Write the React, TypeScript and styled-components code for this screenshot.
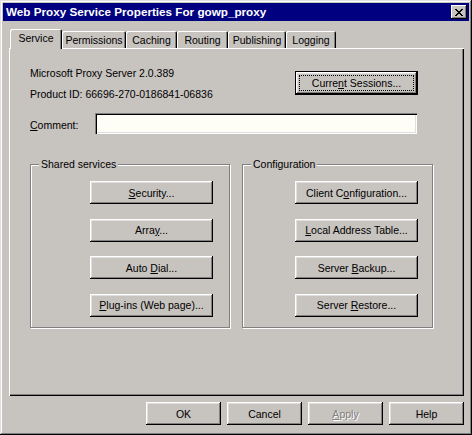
import React from 'react';
import styled, { createGlobalStyle, css } from 'styled-components';

const FACE = '#c7c3bf';
const SHADOW = '#808080';
const LIGHT = '#dfdfdf';

const GlobalStyle = createGlobalStyle`
  html, body { margin: 0; padding: 0; background: ${FACE}; }
  body {
    font-family: "Liberation Sans", Arial, sans-serif;
    font-size: 10.5px;
    color: #000;
  }
  * { box-sizing: border-box; }
`;

const Window = styled.div`
  width: 472px;
  height: 435px;
  padding: 3px;
  background: ${FACE};
  display: flex;
  flex-direction: column;
  box-shadow: inset -1px -1px 0 #000, inset 1px 1px 0 ${LIGHT}, inset -2px -2px 0 ${SHADOW}, inset 2px 2px 0 #fff;
`;

const TitleBar = styled.div`
  height: 18px;
  flex: 0 0 18px;
  background: #000080;
  display: flex;
  align-items: center;
  padding: 0 2px 0 3px;
`;

const Title = styled.span`
  flex: 1;
  color: #fff;
  font-weight: bold;
  font-size: 11.7px;
  line-height: 14px;
  white-space: nowrap;
`;

const CloseButton = styled.div`
  width: 16px;
  height: 14px;
  background: ${FACE};
  display: flex;
  align-items: center;
  justify-content: center;
  box-shadow: inset -1px -1px 0 #000, inset 1px 1px 0 #fff, inset -2px -2px 0 ${SHADOW};
`;

const Body = styled.div`
  flex: 1;
  display: flex;
  flex-direction: column;
  padding: 8px 5px 0 6px;
`;

const TabRow = styled.div`
  height: 19px;
  display: flex;
  align-items: flex-end;
  padding-left: 1px;
  position: relative;
  z-index: 1;
`;

const Tab = styled.div<{ $w: number; $active?: boolean }>`
  width: ${(p) => p.$w}px;
  height: 17px;
  background: ${FACE};
  border-top-left-radius: 2px;
  border-top-right-radius: 2px;
  box-shadow: inset 1px 1px 0 #fff, inset -1px 0 0 #000, inset -2px 0 0 ${SHADOW};
  text-align: center;
  line-height: 13px;
  padding-top: 3px;
  white-space: nowrap;
  ${(p) =>
    p.$active &&
    css`
      height: 20px;
      margin-bottom: -1px;
      position: relative;
      z-index: 2;
    `}
`;

const Panel = styled.div`
  height: 348px;
  flex: 0 0 348px;
  background: ${FACE};
  box-shadow: inset 1px 1px 0 #fff, inset -1px -1px 0 #000, inset -2px -2px 0 ${SHADOW};
  display: flex;
  flex-direction: column;
`;

const TopRow = styled.div`
  height: 65px;
  display: flex;
  justify-content: space-between;
  align-items: flex-start;
  padding: 0 46px 0 21px;
`;

const Info = styled.div`
  padding-top: 19px;
  display: grid;
  row-gap: 8px;
  line-height: 13px;
`;

const Line = styled.div`
  white-space: nowrap;
`;

const ButtonFrame = styled.button<{ $w: number }>`
  width: ${(p) => p.$w}px;
  height: 23px;
  padding: 0;
  border: none;
  background: ${FACE};
  font: inherit;
  font-size: 10.5px;
  color: #000;
  display: flex;
  align-items: center;
  justify-content: center;
  white-space: nowrap;
  box-shadow: inset -1px -1px 0 #000, inset 1px 1px 0 #fff, inset -2px -2px 0 ${SHADOW}, inset 2px 2px 0 ${LIGHT};
`;

const Caption = styled.span<{ $disabled?: boolean }>`
  white-space: pre;
  ${(p) =>
    p.$disabled &&
    css`
      color: ${SHADOW};
      text-shadow: 1px 1px 0 #fff;
    `}
`;

const Button = ({ w, disabled, children }: { w: number; disabled?: boolean; children: React.ReactNode }) => (
  <ButtonFrame $w={w}>
    <Caption $disabled={disabled}>{children}</Caption>
  </ButtonFrame>
);

const DefaultButton = styled.div`
  margin-top: 23px;
  width: 123px;
  height: 24px;
  border: 1px solid #000;
  background: ${FACE};
  box-shadow: inset -1px -1px 0 #000, inset 1px 1px 0 #fff, inset -2px -2px 0 ${SHADOW}, inset 2px 2px 0 ${LIGHT};
  padding: 3px;
`;

const FocusRect = styled.div`
  height: 100%;
  border: 1px dotted #000;
  display: flex;
  align-items: center;
  justify-content: center;
  white-space: nowrap;
`;

const CommentRow = styled.div`
  height: 21px;
  display: flex;
  align-items: center;
  padding-left: 21px;
`;

const Label = styled.span`
  width: 65px;
  padding-top: 3px;
`;

const TextField = styled.div`
  width: 322px;
  height: 21px;
  background: #fefef6;
  box-shadow: inset 1px 1px 0 ${SHADOW}, inset 2px 2px 0 #000, inset -1px -1px 0 #fff, inset -2px -2px 0 ${LIGHT};
`;

const GroupRow = styled.div`
  margin-top: 30px;
  height: 164px;
  display: flex;
  gap: 12px;
  padding-left: 21px;
`;

const Group = styled.div<{ $w: number; $inset: number }>`
  position: relative;
  width: ${(p) => p.$w}px;
  height: 100%;
  border: 1px solid ${SHADOW};
  box-shadow: inset 1px 1px 0 #fff, 1px 1px 0 #fff;
  padding: 16px 0 0 ${(p) => p.$inset - 1}px;
  display: flex;
  flex-direction: column;
  gap: 14.5px;
`;

const Legend = styled.span`
  position: absolute;
  top: -7px;
  left: 8px;
  padding: 0 2px;
  background: ${FACE};
  line-height: 13px;
  white-space: nowrap;
`;

const ButtonRow = styled.div`
  margin-top: 6px;
  display: flex;
  justify-content: flex-end;
  gap: 6px;
`;

const CloseGlyph = () => (
  <svg width="8" height="7" viewBox="0 0 8 7" shapeRendering="crispEdges">
    <path
      fill="#000"
      d="M0 0h2v1h-2zM6 0h2v1h-2zM1 1h2v1h-2zM5 1h2v1h-2zM2 2h4v1h-4zM3 3h2v1h-2zM2 4h4v1h-4zM1 5h2v1h-2zM5 5h2v1h-2zM0 6h2v1h-2zM6 6h2v1h-2z"
    />
  </svg>
);

const tabs: { label: string; w: number; active?: boolean }[] = [
  { label: 'Service', w: 52, active: true },
  { label: 'Permissions', w: 64 },
  { label: 'Caching', w: 51 },
  { label: 'Routing', w: 51 },
  { label: 'Publishing', w: 58 },
  { label: 'Logging', w: 50 },
];

export default function App() {
  return (
    <>
      <GlobalStyle />
      <Window>
        <TitleBar>
          <Title>Web Proxy Service Properties For gowp_proxy</Title>
          <CloseButton>
            <CloseGlyph />
          </CloseButton>
        </TitleBar>
        <Body>
          <TabRow>
            {tabs.map((t) => (
              <Tab key={t.label} $w={t.w} $active={t.active}>
                {t.label}
              </Tab>
            ))}
          </TabRow>
          <Panel>
            <TopRow>
              <Info>
                <Line>Microsoft Proxy Server 2.0.389</Line>
                <Line>Product ID: 66696-270-0186841-06836</Line>
              </Info>
              <DefaultButton>
                <FocusRect>
                  <Caption>
                    Curre<u>n</u>t Sessions...
                  </Caption>
                </FocusRect>
              </DefaultButton>
            </TopRow>
            <CommentRow>
              <Label>
                <u>C</u>omment:
              </Label>
              <TextField />
            </CommentRow>
            <GroupRow>
              <Group $w={200} $inset={60}>
                <Legend>Shared services</Legend>
                <Button w={123}>
                  <u>S</u>ecurity...
                </Button>
                <Button w={123}>
                  Arra<u>y</u>...
                </Button>
                <Button w={123}>
                  Auto <u>D</u>ial...
                </Button>
                <Button w={123}>
                  <u>P</u>lug-ins (Web page)...
                </Button>
              </Group>
              <Group $w={191} $inset={53}>
                <Legend>Configuration</Legend>
                <Button w={123}>
                  Client C<u>o</u>nfiguration...
                </Button>
                <Button w={123}>
                  <u>L</u>ocal Address Table...
                </Button>
                <Button w={123}>
                  Server <u>B</u>ackup...
                </Button>
                <Button w={123}>
                  Server <u>R</u>estore...
                </Button>
              </Group>
            </GroupRow>
          </Panel>
          <ButtonRow>
            <Button w={75}>OK</Button>
            <Button w={75}>Cancel</Button>
            <Button w={75} disabled>
              <u>A</u>pply
            </Button>
            <Button w={75}>Help</Button>
          </ButtonRow>
        </Body>
      </Window>
    </>
  );
}
